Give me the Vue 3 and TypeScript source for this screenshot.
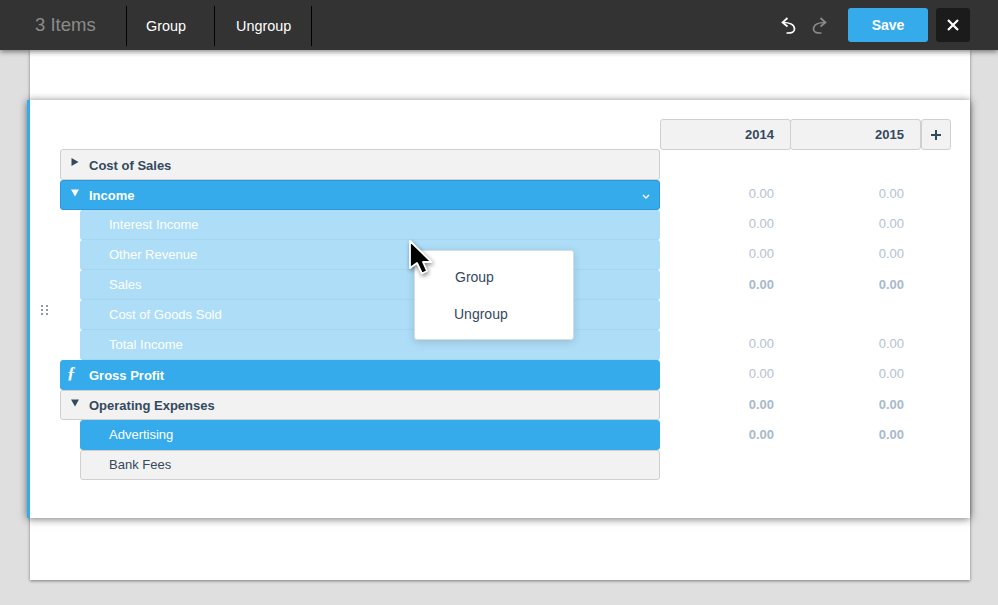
<script setup lang="ts">
interface Row {
  label: string;
  kind: string;
  icon?: string;
  child?: boolean;
  chevron?: boolean;
  values: boolean;
  strong?: boolean;
}

const rows: Row[] = [
  { label: "Cost of Sales", kind: "group", icon: "right", values: false },
  { label: "Income", kind: "group active edged", icon: "down", chevron: true, values: true },
  { label: "Interest Income", kind: "soft", child: true, values: true },
  { label: "Other Revenue", kind: "soft", child: true, values: true },
  { label: "Sales", kind: "soft", child: true, values: true, strong: true },
  { label: "Cost of Goods Sold", kind: "soft", child: true, values: false },
  { label: "Total Income", kind: "soft", child: true, values: true },
  { label: "Gross Profit", kind: "group active", icon: "fx", values: true },
  { label: "Operating Expenses", kind: "group", icon: "down", values: true, strong: true },
  { label: "Advertising", kind: "active", child: true, values: true, strong: true },
  { label: "Bank Fees", kind: "plain", child: true, values: false },
];
</script>

<template>
  <div class="screen">
    <header class="toolbar">
      <div class="count">3 Items</div>
      <button class="tool">Group</button>
      <button class="tool">Ungroup</button>
      <div class="spacer"></div>
      <svg class="history" width="18" height="18" viewBox="0 0 18 18" fill="none" stroke="#fff" stroke-width="1.7">
        <path d="M7.5 2 L2.5 6.5 L7.5 10.5" />
        <path d="M3 6.5 C9 6.5 14.5 8.5 14.5 13 C14.5 16 12 17.2 6.5 17" />
      </svg>
      <svg class="history redo" width="18" height="18" viewBox="0 0 18 18" fill="none" stroke="#8a8a8a" stroke-width="1.7">
        <path d="M10.5 2 L15.5 6.5 L10.5 10.5" />
        <path d="M15 6.5 C9 6.5 3.5 8.5 3.5 13 C3.5 16 6 17.2 11.5 17" />
      </svg>
      <button class="save">Save</button>
      <button class="close" aria-label="Close">
        <svg width="12" height="12" viewBox="0 0 12 12" stroke="#fff" stroke-width="2.2">
          <path d="M1 1 L11 11 M11 1 L1 11" />
        </svg>
      </button>
    </header>

    <main class="page">
      <section class="selected">
        <div class="years">
          <div class="year">2014</div>
          <div class="year">2015</div>
          <button class="add">
            <svg width="10" height="10" viewBox="0 0 10 10" stroke="#34495e" stroke-width="2">
              <path d="M5 0 V10 M0 5 H10" />
            </svg>
          </button>
        </div>

        <div class="sheet">
          <div v-for="row in rows" :key="row.label" class="line">
            <div class="row" :class="[row.kind, { child: row.child }]">
              <svg v-if="row.icon === 'right'" class="arrow" width="8" height="8" viewBox="0 0 8 8">
                <path d="M0.5 0 L7.5 4 L0.5 8 Z" />
              </svg>
              <svg v-if="row.icon === 'down'" class="arrow" width="8" height="8" viewBox="0 0 8 8">
                <path d="M0 0.5 H8 L4 7.5 Z" />
              </svg>
              <span v-if="row.icon === 'fx'" class="fx">ƒ</span>
              <span>{{ row.label }}</span>
              <svg v-if="row.chevron" class="chevron" width="8" height="6" viewBox="0 0 8 6" fill="none" stroke="#fff" stroke-width="1.4">
                <path d="M1 1 L4 4 L7 1" />
              </svg>
            </div>
            <template v-if="row.values">
              <div class="value" :class="{ strong: row.strong }">0.00</div>
              <div class="value" :class="{ strong: row.strong }">0.00</div>
            </template>
          </div>
        </div>

        <svg class="handle" width="7" height="10" viewBox="0 0 7 10" fill="#8d99a8">
          <rect x="0" y="0" width="2" height="2" />
          <rect x="5" y="0" width="2" height="2" />
          <rect x="0" y="4" width="2" height="2" />
          <rect x="5" y="4" width="2" height="2" />
          <rect x="0" y="8" width="2" height="2" />
          <rect x="5" y="8" width="2" height="2" />
        </svg>

        <div class="menu">
          <div class="menu-item">Group</div>
          <div class="menu-item">Ungroup</div>
        </div>

        <svg class="cursor" width="26" height="38" viewBox="0 0 26 38">
          <path d="M2 1 L2 28 L9 23 L14 33.5 L19 31 L15 22 L23.5 22 Z" fill="#000" stroke="#fff" stroke-width="1.8" stroke-linejoin="round" />
        </svg>
      </section>
    </main>
  </div>
</template>

<style>
html,
body {
  margin: 0;
  background: #dfdfdf;
}
</style>

<style scoped>
.screen {
  width: 998px;
  height: 605px;
  overflow: hidden;
  background: #dfdfdf;
  font-family: "Liberation Sans", Arial, sans-serif;
  color: #34495e;
}

.toolbar {
  position: relative;
  z-index: 2;
  height: 50px;
  display: flex;
  align-items: center;
  background: #333;
  box-shadow: 0 2px 5px rgba(0, 0, 0, 0.45);
}

.count {
  width: 126px;
  padding-left: 35px;
  box-sizing: border-box;
  font-size: 18.5px;
  color: #8b8b8b;
}

.tool {
  height: 40px;
  margin-top: 1px;
  padding: 0 0 0 19px;
  border: 0;
  border-left: 1px solid #000;
  background: none;
  color: #fff;
  font: 14.4px "Liberation Sans", Arial, sans-serif;
  width: 88px;
  text-align: left;
}

.tool + .tool {
  width: 98px;
  padding-left: 21px;
  border-right: 1px solid #000;
}

.spacer {
  flex: 1;
}

.history {
  margin-right: 12px;
}

.redo {
  margin-right: 20px;
}

.save {
  width: 80px;
  height: 34px;
  margin-top: -1px;
  margin-right: 8px;
  border: 0;
  border-radius: 3px;
  background: #35abeb;
  color: #fff;
  font: bold 14px "Liberation Sans", Arial, sans-serif;
}

.close {
  width: 34px;
  height: 34px;
  margin-right: 28px;
  border: 0;
  border-radius: 3px;
  background: #1b1b1b;
  display: flex;
  align-items: center;
  justify-content: center;
}

.page {
  width: 940px;
  height: 530px;
  margin-left: 30px;
  padding-top: 50px;
  box-sizing: border-box;
  background: #fff;
  box-shadow: 0 1px 3px rgba(0, 0, 0, 0.45);
}

.selected {
  position: relative;
  width: 943px;
  height: 418px;
  margin-left: -3px;
  padding: 19px 19px 0 30px;
  box-sizing: border-box;
  background: #fff;
  border-left: 3px solid #35abeb;
  box-shadow: 0 1px 8px rgba(0, 0, 0, 0.55);
}

.years {
  display: flex;
  justify-content: flex-end;
  height: 31px;
}

.year {
  width: 131px;
  padding-right: 16px;
  box-sizing: border-box;
  border: 1px solid #cfcfcf;
  border-radius: 3px;
  background: #f2f2f2;
  text-align: right;
  line-height: 29px;
  font-size: 13px;
  font-weight: bold;
}

.year:first-child {
  margin-right: -1px;
}

.add {
  width: 30px;
  height: 31px;
  padding: 0;
  border: 1px solid #cfcfcf;
  border-radius: 3px;
  background: #f2f2f2;
  display: flex;
  align-items: center;
  justify-content: center;
}

.line {
  display: flex;
  height: 30px;
}

.row {
  width: 600px;
  height: 30px;
  flex: none;
  display: flex;
  align-items: center;
  position: relative;
  box-sizing: border-box;
  padding-left: 28px;
  font-size: 13px;
  border: 1px solid transparent;
  border-radius: 3px;
}

.line:first-child .row {
  height: 31px;
  margin-top: -1px;
  padding-top: 1px;
}

.row.child {
  margin-left: 20px;
  width: 580px;
  padding-bottom: 2px;
}

.group {
  font-weight: bold;
}

.group,
.plain {
  background: #f2f2f2;
  border-color: #cfcfcf;
}

.active {
  background: #35abeb;
  border-color: #35abeb;
  color: #fff;
}

.edged {
  border-color: #2f97dc;
}

.soft {
  background: #aeddf7;
  border-color: #aeddf7 #aeddf7 #a6d5f0;
  color: #fff;
}

.arrow {
  position: absolute;
  left: 10px;
  top: 8px;
  fill: #34495e;
}

.active .arrow {
  fill: #fff;
}

.fx {
  position: absolute;
  left: 6px;
  top: 2px;
  font: italic bold 17px "Liberation Serif", serif;
}

.chevron {
  position: absolute;
  right: 9px;
  top: 13px;
}

.value {
  width: 130px;
  flex: none;
  box-sizing: border-box;
  padding-right: 16px;
  text-align: right;
  line-height: 27px;
  font-size: 13px;
  color: #b3c1d1;
}

.value.strong {
  font-weight: bold;
  color: #a9b9cb;
  line-height: 29px;
}

.handle {
  position: absolute;
  left: 11px;
  top: 205px;
}

.menu {
  position: absolute;
  left: 384px;
  top: 150px;
  width: 160px;
  height: 90px;
  box-sizing: border-box;
  padding-top: 8px;
  border-radius: 3px;
  background: #fff;
  border: 1px solid #d4dde5;
  box-shadow: 0 2px 8px rgba(0, 0, 0, 0.15);
  font-size: 14px;
}

.menu-item {
  height: 37px;
  line-height: 36px;
  padding-left: 39px;
}

.menu-item:first-child {
  padding-left: 40px;
}

.cursor {
  position: absolute;
  left: 378px;
  top: 140px;
  filter: drop-shadow(1px 2px 2px rgba(0, 0, 0, 0.45));
}
</style>
